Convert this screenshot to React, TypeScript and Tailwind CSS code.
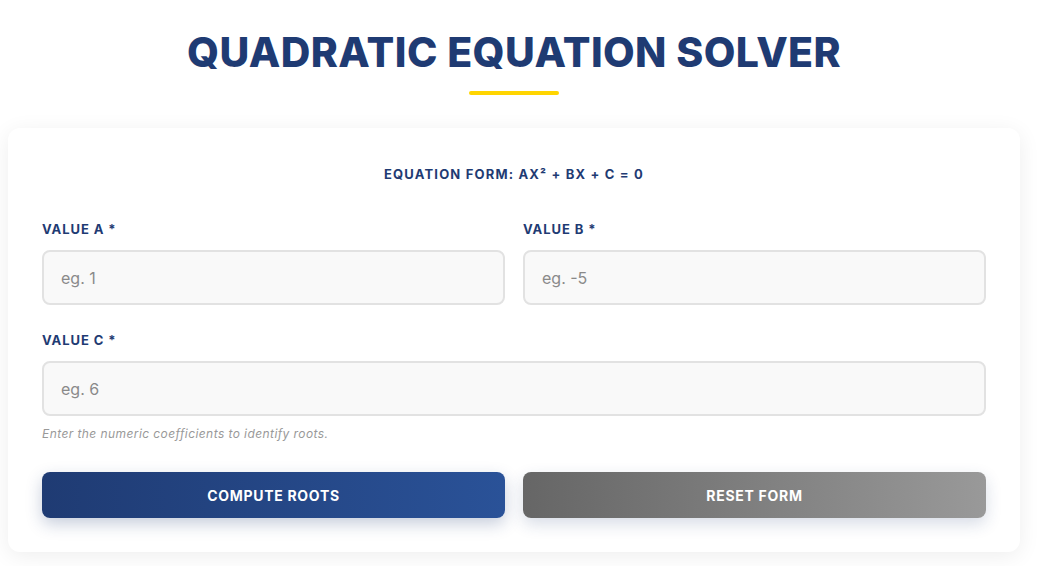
import React from 'react'

const font = { fontFamily: 'Inter, "Noto Sans", sans-serif' }

function Field({ label, placeholder }: { label: string; placeholder: string }) {
  return (
    <div className="flex flex-col">
      <label className="text-[13px] leading-5 font-bold tracking-[0.07em] text-[#1f3b73] mb-[11px]">{label}</label>
      <input
        type="text"
        placeholder={placeholder}
        className="h-[55px] w-full rounded-lg border-2 border-[#e2e2e2] bg-[#f9f9f9] px-[17px] text-[16px] text-[#333] placeholder:text-[#8a8a8a] outline-none"
      />
    </div>
  )
}

export default function App() {
  return (
    <div className="min-h-screen bg-white" style={font}>
      <div className="w-[1012px] ml-[8px] pt-[28px] pb-[14px]">
        {/* header */}
        <div className="flex flex-col items-center">
          <h1 className="text-[41px] leading-[48px] font-extrabold tracking-[0.01em] text-[#1f3b73]">
            QUADRATIC EQUATION SOLVER
          </h1>
          <div className="mt-[15px] h-[4px] w-[90px] rounded-full bg-[#ffd500]" />
        </div>

        {/* card */}
        <div className="mt-[33px] rounded-xl bg-white px-[34px] pt-[34px] pb-[34px] shadow-[0_4px_22px_rgba(0,0,0,0.07)]">
          <p className="text-center text-[13px] leading-6 font-bold tracking-[0.09em] text-[#1f3b73]">
            EQUATION FORM: AX² + BX + C = 0
          </p>

          <div className="mt-[33px] grid grid-cols-2 gap-x-[18px]">
            <Field label="VALUE A *" placeholder="eg. 1" />
            <Field label="VALUE B *" placeholder="eg. -5" />
          </div>

          <div className="mt-[25px]">
            <Field label="VALUE C *" placeholder="eg. 6" />
            <p className="mt-[9px] text-[12px] leading-[18px] italic tracking-[0.035em] text-[#999]">
              Enter the numeric coefficients to identify roots.
            </p>
          </div>

          <div className="mt-[29px] grid grid-cols-2 gap-x-[18px]">
            <button className="h-[46px] rounded-lg bg-gradient-to-r from-[#1f3b73] to-[#2a5298] text-[14px] font-bold tracking-[0.05em] text-white shadow-[0_6px_16px_rgba(31,59,115,0.25)]">
              COMPUTE ROOTS
            </button>
            <button className="h-[46px] rounded-lg bg-gradient-to-r from-[#666666] to-[#999999] text-[14px] font-bold tracking-[0.05em] text-white shadow-[0_6px_16px_rgba(31,59,115,0.18)]">
              RESET FORM
            </button>
          </div>
        </div>
      </div>
    </div>
  )
}
